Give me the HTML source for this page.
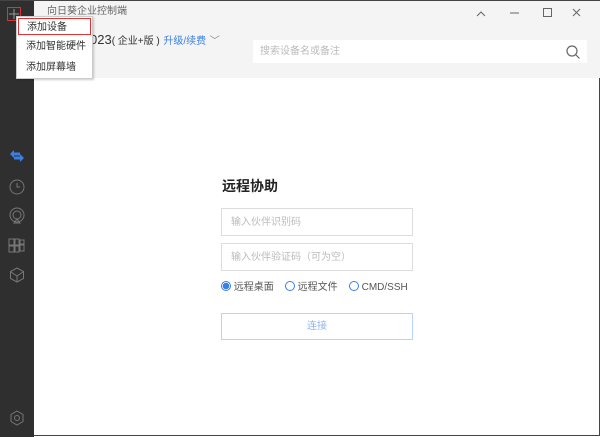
<!DOCTYPE html><html><head><meta charset="utf-8"><style>
*{margin:0;padding:0;box-sizing:border-box}
body{width:600px;height:436px;position:relative;overflow:hidden;background:#fff;font-family:"Liberation Sans","Noto Sans CJK SC",sans-serif;border:1px solid #444;border-left:none;line-height:1}
.abs{position:absolute}
.sb{left:0;top:0;width:34px;height:436px;background:#2f2f2f}
.hd{left:34px;top:0;width:566px;height:77px;background:#f4f4f4}
.t{font-size:10px;color:#666}
.inp{left:221px;width:192px;height:28px;border:1px solid #ddd;font-size:10px;color:#bbb;padding:9px 0 0 9px}
</style></head><body>
<div class="abs sb"></div>
<div class="abs hd"></div>
<div class="abs t" style="left:47px;top:6px">向日葵企业控制端</div>
<div class="abs" style="left:90px;top:32px;font-size:13px;color:#333">023<span style="font-size:10px">( 企业+版 )</span> <span style="font-size:10px;color:#3a7fe6">升级/续费</span> <span style="font-size:10px;color:#888">﹀</span></div>
<svg class="abs" style="left:470px;top:5px" width="125" height="14" stroke="#666" fill="none" stroke-width="1"><path d="M7 10l4-4 4 4"/><path d="M40 7h9"/><rect x="73.5" y="2.5" width="8" height="8"/><path d="M103 3l7 7M110 3l-7 7"/></svg>
<div class="abs" style="left:253px;top:39px;width:334px;height:23px;background:#fff;font-size:10px;color:#bbb;padding:7px 0 0 7px">搜索设备名或备注</div>
<svg class="abs" style="left:565px;top:43px" width="16" height="16" stroke="#666" fill="none" stroke-width="1.2"><circle cx="7" cy="7" r="5"/><path d="M11 11l3.5 3.5"/></svg>
<div class="abs" style="left:222px;top:178px;font-size:14px;font-weight:bold;color:#222">远程协助</div>
<div class="abs inp" style="top:207px">输入伙伴识别码</div>
<div class="abs inp" style="top:242px">输入伙伴验证码（可为空）</div>
<div class="abs" style="left:221px;top:280px;font-size:10px;color:#555;white-space:nowrap">
<span style="display:inline-block;width:10px;height:10px;border-radius:50%;border:1px solid #3a7fe6;vertical-align:-1px;background:radial-gradient(#3a7fe6 3px,#fff 3.5px)"></span> 远程桌面&nbsp;&nbsp;&nbsp;&nbsp;<span style="display:inline-block;width:10px;height:10px;border-radius:50%;border:1px solid #3a7fe6;vertical-align:-1px"></span> 远程文件&nbsp;&nbsp;&nbsp;&nbsp;<span style="display:inline-block;width:10px;height:10px;border-radius:50%;border:1px solid #3a7fe6;vertical-align:-1px"></span> CMD/SSH</div>
<div class="abs" style="left:221px;top:312px;width:192px;height:27px;border:1px solid #b8d3f7;font-size:10px;color:#8fb5ee;text-align:center;line-height:25px">连接</div>
<svg class="abs" style="left:0;top:140px" width="34" height="296" fill="none" stroke="#777" stroke-width="1">
<path d="M10 13l4-4v2.5h6v3h-6v2.5z M24 17l-4 4v-2.5h-6v-3h6v-2.5z" fill="#3a7fe6" stroke="none"/>
<circle cx="17" cy="46" r="7"/><path d="M17 42v4h3"/>
<circle cx="17" cy="74" r="7"/><circle cx="17" cy="74" r="4"/><path d="M14 82l3-4 3 4z"/>
<rect x="9" y="98" width="5" height="6"/><rect x="15" y="98" width="4" height="6"/><rect x="20" y="99" width="4" height="4"/><rect x="9" y="105" width="5" height="6"/><rect x="15" y="105" width="4" height="6"/><rect x="20" y="104" width="4" height="6"/>
<path d="M17 127l6.5 3.5v7L17 141l-6.5-3.5v-7z M11 131l6 4 6-4 M17 135v6"/>
<path d="M17 270l6 3.5v7L17 284l-6-3.5v-7z"/><circle cx="17" cy="277" r="2.5"/>
</svg>
<svg class="abs" style="left:7px;top:6px" width="14" height="14"><path d="M7 2v10M2 7h10" stroke="#999" stroke-width="1"/><rect x="0.5" y="0.5" width="13" height="13" fill="none" stroke="#d33"/></svg>
<div class="abs" style="left:16px;top:15px;width:77px;height:63px;background:#fff;border:1px solid #ccc;box-shadow:1px 1px 2px rgba(0,0,0,.2);font-size:10px;color:#333">
<div style="margin:1px;height:17px;border:1px solid #d33;padding:4px 0 0 8px">添加设备</div>
<div style="padding:6px 0 0 9px">添加智能硬件</div>
<div style="padding:11px 0 0 9px">添加屏幕墙</div>
</div>
</body></html>
